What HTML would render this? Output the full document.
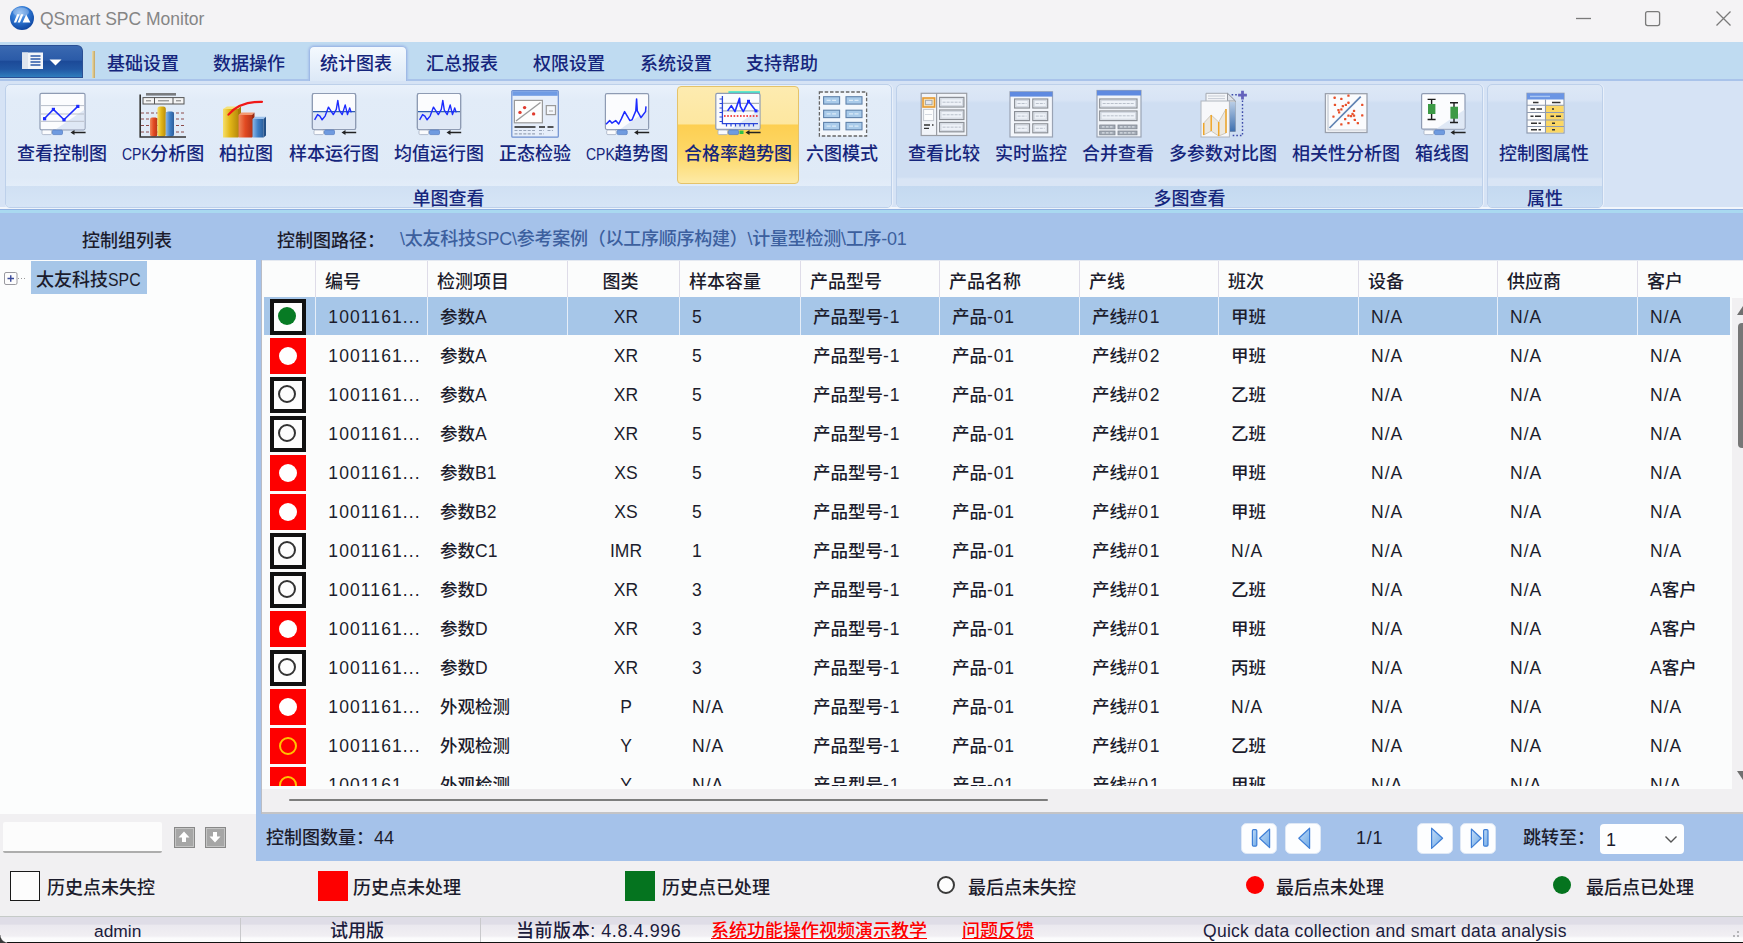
<!DOCTYPE html>
<html lang="zh-CN">
<head>
<meta charset="utf-8">
<title>QSmart SPC Monitor</title>
<style>
*{box-sizing:border-box;margin:0;padding:0}
html,body{width:1743px;height:943px;overflow:hidden;background:#f0f0f0}
body{font-family:"Liberation Sans","Noto Sans CJK SC",sans-serif;font-size:17.5px;color:#1c1c2c;position:relative;font-weight:500}
.abs{position:absolute}
#titlebar{left:0;top:0;width:1743px;height:42px;background:#f4f3f5}
#title{left:40px;top:7px;font-size:17.5px;color:#858585;line-height:24px;white-space:nowrap}
#tabstrip{left:0;top:42px;width:1743px;height:38px;background:#bfdbf1}
#tabline{left:0;top:79px;width:1743px;height:2px;background:#a9c3ea}
.tab{top:47px;height:34px;font-size:18px;line-height:34px;color:#15257c;white-space:nowrap;text-align:center;width:98px}
#tabactive{left:309px;top:46px;width:98px;height:35px;box-shadow:0 0 2px 1px #a9c2ea;clip-path:inset(-4px -4px 0 -4px);border:1px solid #9fbae6;border-bottom:none;border-radius:5px 5px 0 0;background:linear-gradient(#f4f9fe,#dce8f7)}
#appbtn{left:0;top:45px;width:83px;height:33px;border-radius:0 6px 0 0;background:linear-gradient(#3a69b1 0%,#2b5ba8 45%,#1c4a98 50%,#2157a3 75%,#2f7dbd 100%);border:1px solid #2a4f94;border-left:none}
#tabsep{left:92px;top:51px;width:3px;height:27px;background:linear-gradient(90deg,#e9dcae,#c5a662)}
#ribbon{left:0;top:81px;width:1743px;height:133px;background:linear-gradient(to bottom,#d6e3f5 0,#d6e3f5 126.5px,#f2f6fc 126.5px,#f2f6fc 128px,#8fb1e2 128px,#8fb1e2 129.5px,#a9d9f0 129.5px,#a9d9f0 132px,#a5c2ea 132px)}
.group{top:84px;height:124px;border:1px solid #bdd0ea;border-radius:5px;background:linear-gradient(#dde8f6 0,#d8e4f5 15px,#cfdef2 18px,#cfdef2 92px,#d9e5f5 94px,#d9e5f5 102px);box-shadow:0 1px 0 #eef4fb, 1px 0 0 #e9f0fa}
.group.hov{background:linear-gradient(#e9f1fb 0,#e2ecf8 14px,#dfeaf7 92px,#e3edf9 102px)}
.group.hov .gcap{background:linear-gradient(#d0e0f3,#d6e5f6)}
.gcap{left:0;right:0;bottom:0;height:21px;line-height:26.5px;text-align:center;font-size:18px;color:#15257c;background:linear-gradient(#c4d9f0,#cadef3);border-radius:0 0 4px 4px}
.btn{top:86px;height:98px;text-align:center}
.btn .lbl{position:absolute;left:-30px;right:-30px;top:56px;font-size:18px;line-height:24px;color:#15257c;white-space:nowrap;text-align:center}
.btn svg{position:absolute;top:4px;left:50%;margin-left:-24px}
#hot{left:677px;top:86px;width:122px;height:98px;border:1px solid #e5c36a;border-radius:4px;background:linear-gradient(#fdebb0 0%,#fde7a0 38%,#fdcf52 40%,#fdd868 70%,#fdeaa6 100%)}
#pathbar{left:0;top:214px;width:1743px;height:46px;background:#a5c2ea}
#pathbar span{position:absolute;top:14px;line-height:24px;font-size:18px;white-space:nowrap}
#left{left:0;top:260px;width:256px;height:554px;background:#fcfdfd}
#split{left:256px;top:260px;width:5px;height:601px;background:#a5c2ea}
#gridedge{left:261px;top:260px;width:1px;height:554px;background:#b9bcc4}
#grid{left:262px;top:260px;width:1481px;height:554px;background:#fbfcfc;overflow:hidden;border-top:1px solid #e4e9f1}
#botbar{left:0;top:814px;width:1743px;height:47px;background:#a5c2ea}
#leftbot{left:0;top:814px;width:256px;height:47px;background:#f1f0f2}
#legend{left:0;top:861px;width:1743px;height:54px;background:#f1f0f2}
#status{left:0;top:915px;width:1743px;height:28px;background:linear-gradient(to bottom,#f1f0f2 0,#f1f0f2 1px,#c6cbc8 1px,#c6cbc8 2px,#dfdde7 2px,#dfdde7 9px,#ebe9ef 10.5px,#f1eff3 21px,#fbfbfc 23px,#fcfcfc 100%)}
.hd{top:0;height:36px;line-height:43px;font-size:18px;padding-left:9px;border-left:1px solid #dedce8;white-space:nowrap;color:#1c1c2c}
.row{left:2px;width:1465.5px;height:37.5px}
.row.sel{background:#a6c6e8}
.c{top:0;height:40px;line-height:40px;white-space:nowrap;padding-left:13px;font-size:17.5px}
.ic{left:5.6px;top:1.5px;width:36px;height:36px}
.ic.k{border:4.2px solid #111;background:#fdfdfd}
.ic.r{background:#fe0000}
.dot{position:absolute;border-radius:50%}
.st{top:4px;line-height:24px;font-size:18px;white-space:nowrap;color:#1c1c3c}
.num{letter-spacing:1.1px;margin-left:0.3px}
.sp{top:0;width:1px;height:37.5px;background:#e6eef8}
.cpk{display:inline-block;font-size:16px;transform:scaleX(.875);transform-origin:0 50%;margin-right:-4.2px}
.lt{letter-spacing:.8px}
.lh{letter-spacing:1.6px}
.na{letter-spacing:1px}
</style>
</head>
<body>
<div id="titlebar" class="abs"></div>
<svg class="abs" style="left:9px;top:5px" width="26" height="26" viewBox="0 0 26 26">
<defs><radialGradient id="lg" cx="0.42" cy="0.3" r="0.75"><stop offset="0" stop-color="#7fb4f0"/><stop offset="0.45" stop-color="#2f78d4"/><stop offset="1" stop-color="#0b3f9a"/></radialGradient></defs>
<circle cx="13" cy="13" r="12" fill="url(#lg)"/>
<ellipse cx="12" cy="7" rx="8" ry="4.5" fill="#fff" opacity="0.28"/>
<path d="M8.2 9.2 L10.6 9.2 L7.2 17.6 L4.8 17.6 Z M12 9.2 L14.4 9.2 L11 17.6 L8.6 17.6 Z M17.2 9.6 L21.4 17.6 L13.6 17.6 Z" fill="#fff"/>
</svg>
<div id="title" class="abs">QSmart SPC Monitor</div>
<svg class="abs" style="left:1560px;top:0" width="183" height="42" viewBox="0 0 183 42" fill="none" stroke="#7a7a7a" stroke-width="1.3">
<path d="M16 18.5 H31"/>
<rect x="85.6" y="11.6" width="14" height="14" rx="2"/>
<path d="M156.5 11.5 L170.5 25.5 M170.5 11.5 L156.5 25.5"/>
</svg>
<div id="tabstrip" class="abs"></div>
<div id="ribbon" class="abs"></div>
<div id="tabline" class="abs"></div>
<div id="tabactive" class="abs"></div>
<div id="appbtn" class="abs"><svg class="abs" style="left:20px;top:5px" width="46" height="22" viewBox="0 0 46 22">
<rect x="2" y="1.5" width="21" height="16.5" fill="#f4f6f9"/>
<rect x="2" y="1.5" width="6" height="16.5" fill="#dfe5ee"/>
<path d="M10.5 5 H20.5 M10.5 8 H20.5 M10.5 11 H20.5 M10.5 14 H20.5" stroke="#2c5aa8" stroke-width="1.3"/>
<path d="M29.5 8.5 H41.5 L35.5 14.5 Z" fill="#fff"/>
</svg></div>
<div id="tabsep" class="abs"></div>
<div class="abs tab" style="left:94px">基础设置</div>
<div class="abs tab" style="left:200px">数据操作</div>
<div class="abs tab" style="left:307px">统计图表</div>
<div class="abs tab" style="left:413px">汇总报表</div>
<div class="abs tab" style="left:520px">权限设置</div>
<div class="abs tab" style="left:627px">系统设置</div>
<div class="abs tab" style="left:733px">支持帮助</div>

<div class="abs group hov" style="left:5px;width:887px"><div class="abs gcap">单图查看</div></div>
<div class="abs group" style="left:896px;width:587px"><div class="abs gcap">多图查看</div></div>
<div class="abs group" style="left:1487px;width:116px"><div class="abs gcap">属性</div></div>
<div id="hot" class="abs"></div>
<div class="abs btn" style="left:38px;width:48px"><svg width="48" height="48" viewBox="0 0 48 48" style="overflow:visible" ><rect x="2" y="3.3" width="45" height="36.5" rx="1.5" fill="#fbfcfe" stroke="#8e9bb3" stroke-width="1.2"/><path d="M46.4 19.725 V39.199999999999996 H17.75 Z" fill="#dfe8f5"/><rect x="4" y="40" width="9.5" height="4.6" rx="1.2" fill="#fafbfd" stroke="#a5afc2" stroke-width="0.8"/><rect x="14.5" y="40" width="10" height="4.6" rx="1.2" fill="#6f9be0" stroke="#5b82c4" stroke-width="0.8"/><path d="M47.6 42.5 H36" stroke="#222" stroke-width="1.5"/><path d="M32.5 42.5 L36.5 40 V45 Z" fill="#222"/><path d="M3 15.6 H46 M3 24 H46 M3 31.3 H46" stroke="#b9bfca" stroke-width="1"/><polyline points="6.5,28.6 15.4,19.4 26,29.8 39.8,16.4" fill="none" stroke="#1c2cff" stroke-width="1.5"/><g fill="#1c2cff"><rect x="5" y="27.1" width="3.2" height="3.2"/><rect x="13.8" y="17.8" width="3.2" height="3.2"/><rect x="24.4" y="28.2" width="3.2" height="3.2"/><rect x="38.2" y="14.8" width="3.2" height="3.2"/></g></svg><div class="lbl">查看控制图</div></div>
<div class="abs btn" style="left:139px;width:48px"><svg width="48" height="48" viewBox="0 0 48 48" style="overflow:visible" ><rect x="7" y="3" width="30" height="2.6" fill="#555" opacity="0.75"/><rect x="4" y="7.6" width="41" height="6.4" fill="#f4f4f4" stroke="#555" stroke-width="1"/><path d="M15.5 7.6 V14 M34 7.6 V14" stroke="#555"/><path d="M7 10.8 H12 M19 10.8 H30 M37 10.8 H42" stroke="#777" stroke-width="1"/><path d="M2 23 H46 M2 29 H46 M2 35.5 H46 M2 42 H46" stroke="#8c4a4a" stroke-width="1" stroke-dasharray="3 2"/><defs><linearGradient id="gr" x1="0" x2="1"><stop offset="0" stop-color="#f08a5c"/><stop offset="0.5" stop-color="#e24a22"/><stop offset="1" stop-color="#b8361a"/></linearGradient><linearGradient id="gy" x1="0" x2="1"><stop offset="0" stop-color="#f6df6a"/><stop offset="0.45" stop-color="#e3b718"/><stop offset="1" stop-color="#b98c0c"/></linearGradient><linearGradient id="gb" x1="0" x2="1"><stop offset="0" stop-color="#8cb8e8"/><stop offset="0.5" stop-color="#3f7fc6"/><stop offset="1" stop-color="#2c5f9c"/></linearGradient></defs><rect x="11" y="27.5" width="7.4" height="19" rx="2" fill="url(#gr)"/><rect x="18.4" y="16.4" width="8.4" height="30" rx="2.5" fill="url(#gy)"/><rect x="26.8" y="21.6" width="8.2" height="25" rx="2.5" fill="url(#gb)"/><path d="M1.2 4.5 V47 H47" fill="none" stroke="#333" stroke-width="1.6"/></svg><div class="lbl"><span class="cpk">CPK</span>分析图</div></div>
<div class="abs btn" style="left:222px;width:48px"><svg width="48" height="48" viewBox="0 0 48 48" style="overflow:visible" ><rect x="1" y="19" width="15" height="28.5" fill="url(#gy)"/><path d="M1 19 L5 16.5 H19 L16 19 Z" fill="#f4e27a"/><path d="M16 19 L19 16.5 V45 L16 47.5 Z" fill="#a67c08"/><rect x="16.5" y="25" width="13.5" height="22.5" fill="url(#gr)"/><path d="M16.5 25 L19.5 22.5 H32.5 L30 25 Z" fill="#f39a72"/><path d="M30 25 L32.5 22.5 V45.5 L30 47.5 Z" fill="#9c2c12"/><rect x="30.5" y="29" width="11" height="18.5" fill="url(#gb)"/><path d="M30.5 29 L33 26.8 H44 L41.5 29 Z" fill="#9cc2ec"/><path d="M41.5 29 L44 26.8 V45.5 L41.5 47.5 Z" fill="#234f86"/><path d="M6.5 24.6 C13 17, 24 11.5, 40 11.8" fill="none" stroke="#f01818" stroke-width="2.2" stroke-linecap="round"/></svg><div class="lbl">柏拉图</div></div>
<div class="abs btn" style="left:310px;width:48px"><svg width="48" height="48" viewBox="0 0 48 48" style="overflow:visible" ><rect x="2.4" y="3.5" width="43.2" height="36" rx="1.5" fill="#fbfcfe" stroke="#8e9bb3" stroke-width="1.2"/><rect x="3" y="21.6" width="42" height="17.3" fill="#dfe8f5"/><rect x="2.4" y="3.5" width="43.2" height="36" rx="1.5" fill="none" stroke="#8e9bb3" stroke-width="1.2"/><path d="M3 21.6 H45" stroke="#2f5fae" stroke-width="1.4"/><polyline points="4.6,29.8 7.6,24.6 9.9,26.1 12.1,29.8 15.1,26.1 18.5,17.1 23.3,24.6 26.3,19.4 27.8,10.4 29.3,20.1 32.2,24.6 35.2,14.9 37.5,24.6 39.7,17.9 41.2,22.4" fill="none" stroke="#1c2cff" stroke-width="1.4" stroke-linejoin="round"/><rect x="4" y="40" width="9.5" height="4.6" rx="1.2" fill="#fafbfd" stroke="#a5afc2" stroke-width="0.8"/><rect x="14.5" y="40" width="10" height="4.6" rx="1.2" fill="#6f9be0" stroke="#5b82c4" stroke-width="0.8"/><path d="M46.2 42.5 H35" stroke="#222" stroke-width="1.5"/><path d="M31.5 42.5 L35.5 40 V45 Z" fill="#222"/></svg><div class="lbl">样本运行图</div></div>
<div class="abs btn" style="left:415px;width:48px"><svg width="48" height="48" viewBox="0 0 48 48" style="overflow:visible" ><rect x="2.4" y="3.5" width="43.2" height="36" rx="1.5" fill="#fbfcfe" stroke="#8e9bb3" stroke-width="1.2"/><rect x="3" y="21.6" width="42" height="17.3" fill="#dfe8f5"/><rect x="2.4" y="3.5" width="43.2" height="36" rx="1.5" fill="none" stroke="#8e9bb3" stroke-width="1.2"/><path d="M3 21.6 H45" stroke="#2f5fae" stroke-width="1.4"/><polyline points="4.6,29.8 7.6,24.6 9.9,26.1 12.1,29.8 15.1,26.1 18.5,17.1 23.3,24.6 26.3,19.4 27.8,10.4 29.3,20.1 32.2,24.6 35.2,14.9 37.5,24.6 39.7,17.9 41.2,22.4" fill="none" stroke="#1c2cff" stroke-width="1.4" stroke-linejoin="round"/><rect x="4" y="40" width="9.5" height="4.6" rx="1.2" fill="#fafbfd" stroke="#a5afc2" stroke-width="0.8"/><rect x="14.5" y="40" width="10" height="4.6" rx="1.2" fill="#6f9be0" stroke="#5b82c4" stroke-width="0.8"/><path d="M46.2 42.5 H35" stroke="#222" stroke-width="1.5"/><path d="M31.5 42.5 L35.5 40 V45 Z" fill="#222"/></svg><div class="lbl">均值运行图</div></div>
<div class="abs btn" style="left:511px;width:48px"><svg width="48" height="48" viewBox="0 0 48 48" style="overflow:visible" ><rect x="0.8" y="0.6" width="46.5" height="46.6" rx="1" fill="#e6eefa" stroke="#6d8fd0" stroke-width="1.2"/><rect x="1.4" y="1.2" width="45.3" height="4.6" fill="#6f9be4"/><rect x="3.4" y="10.4" width="28" height="22.4" fill="#fdfdfd" stroke="#9a9a9a" stroke-width="1.2"/><path d="M5 31 L29.5 12.5" stroke="#9a9a9a" stroke-width="1.4"/><g fill="#e03a2e"><circle cx="13.6" cy="17.6" r="1.7"/><circle cx="9" cy="22.4" r="1.7"/><circle cx="22.6" cy="23.9" r="1.7"/></g><rect x="35.3" y="15.6" width="9.2" height="9" fill="#f4f7fb" stroke="#9a9a9a" stroke-width="1.2"/><path d="M38 21 H42" stroke="#aaa"/><path d="M3.5 37 H24.5 M28 37 H34 M36.5 37 H42.5" stroke="#222" stroke-width="1.6"/><path d="M3.5 40.5 H24 M28 40.5 H33 M36.5 40.5 H42 M3.5 43.8 H24 M28 43.8 H33" stroke="#98a4b8" stroke-width="1.2" stroke-dasharray="3 1.4"/></svg><div class="lbl">正态检验</div></div>
<div class="abs btn" style="left:603px;width:48px"><svg width="48" height="48" viewBox="0 0 48 48" style="overflow:visible" ><rect x="2.4" y="3.7" width="43.2" height="35.8" rx="1.5" fill="#fbfcfe" stroke="#8e9bb3" stroke-width="1.2"/><path d="M45.0 19.81 V38.9 H17.52 Z" fill="#dfe8f5"/><rect x="3.7" y="40" width="9.5" height="4.6" rx="1.2" fill="#fafbfd" stroke="#a5afc2" stroke-width="0.8"/><rect x="14.2" y="40" width="10" height="4.6" rx="1.2" fill="#6f9be0" stroke="#5b82c4" stroke-width="0.8"/><path d="M46.2 42.5 H34.6" stroke="#222" stroke-width="1.5"/><path d="M31.1 42.5 L35.1 40 V45 Z" fill="#222"/><polyline points="3,34.3 6.7,30.6 8.9,33.1 12.7,30.6 15.7,34 18.2,29.1 21.6,21.6 26.9,30.6 29.1,29.8 32.8,20.9 33.6,8.9 34.3,20.9 38,27.6 42.5,21.6 43,16.4" fill="none" stroke="#1c2cff" stroke-width="1.5" stroke-linejoin="round"/></svg><div class="lbl"><span class="cpk">CPK</span>趋势图</div></div>
<div class="abs btn" style="left:714px;width:48px"><svg width="48" height="48" viewBox="0 0 48 48" style="overflow:visible" ><rect x="14.4" y="1.2" width="31.6" height="2.4" fill="#3fe6cf"/><rect x="1.8" y="3.4" width="44.2" height="36" rx="1.5" fill="#fbfcfe" stroke="#8e9bb3" stroke-width="1.2"/><path d="M45.4 19.599999999999998 V38.8 H17.27 Z" fill="#dfe8f5"/><rect x="4" y="40" width="9.5" height="4.6" rx="1.2" fill="#fafbfd" stroke="#a5afc2" stroke-width="0.8"/><rect x="14.5" y="40" width="10" height="4.6" rx="1.2" fill="#6f9be0" stroke="#5b82c4" stroke-width="0.8"/><path d="M46.6 42.5 H35.0" stroke="#222" stroke-width="1.5"/><path d="M31.5 42.5 L35.5 40 V45 Z" fill="#222"/><rect x="25.5" y="40.6" width="4" height="3.4" fill="#2fc04a"/><path d="M9 13.4 H45 M9 20.9 H45" stroke="#aab0ba" stroke-width="1.2"/><path d="M8.4 6 V33.6 H44" fill="none" stroke="#2a46d8" stroke-width="1.3"/><path d="M5.5 9 H8.4 M5.5 13.5 H8.4 M5.5 18 H8.4 M5.5 22.5 H8.4 M5.5 27 H8.4 M5.5 31.5 H8.4" stroke="#2a46d8" stroke-width="1"/><path d="M12.5 33.6 V36.4 M17 33.6 V36.4 M21.5 33.6 V36.4 M26 33.6 V36.4 M30.5 33.6 V36.4 M35 33.6 V36.4 M39.5 33.6 V36.4" stroke="#2a46d8" stroke-width="1.2"/><path d="M10 26 H45" stroke="#f01414" stroke-width="1.6" stroke-dasharray="1.6 1.6"/><polyline points="13.6,20.9 17.3,15.6 21,21.6 25.5,8.2 26.3,16.4 29.3,21.6 34.5,11.2 42,20.9" fill="none" stroke="#1c2cff" stroke-width="1.6" stroke-linejoin="round"/><rect x="40.5" y="19.4" width="3" height="3" fill="#1c2cff"/><rect x="33" y="9.8" width="3" height="3" fill="#1c2cff"/></svg><div class="lbl">合格率趋势图</div></div>
<div class="abs btn" style="left:818px;width:48px"><svg width="48" height="48" viewBox="0 0 48 48" style="overflow:visible" ><rect x="1.4" y="2" width="47.2" height="44" fill="#f3f7fc" stroke="#666" stroke-width="1.3" stroke-dasharray="3.5 1.8"/><rect x="5.6" y="6.7" width="16" height="7.4" fill="#a9cbea" stroke="#5f82ab" stroke-width="1.1"/><path d="M8.6 10.4 H18.6" stroke="#dcebf8" stroke-width="1.4" stroke-dasharray="4 1.5"/><rect x="5.6" y="20.2" width="16" height="7.4" fill="#a9cbea" stroke="#5f82ab" stroke-width="1.1"/><path d="M8.6 23.9 H18.6" stroke="#dcebf8" stroke-width="1.4" stroke-dasharray="4 1.5"/><rect x="5.6" y="32.4" width="16" height="7.4" fill="#a9cbea" stroke="#5f82ab" stroke-width="1.1"/><path d="M8.6 36.1 H18.6" stroke="#dcebf8" stroke-width="1.4" stroke-dasharray="4 1.5"/><rect x="28" y="6.7" width="16" height="7.4" fill="#a9cbea" stroke="#5f82ab" stroke-width="1.1"/><path d="M31 10.4 H41" stroke="#dcebf8" stroke-width="1.4" stroke-dasharray="4 1.5"/><rect x="28" y="20.2" width="16" height="7.4" fill="#a9cbea" stroke="#5f82ab" stroke-width="1.1"/><path d="M31 23.9 H41" stroke="#dcebf8" stroke-width="1.4" stroke-dasharray="4 1.5"/><rect x="28" y="32.4" width="16" height="7.4" fill="#a9cbea" stroke="#5f82ab" stroke-width="1.1"/><path d="M31 36.1 H41" stroke="#dcebf8" stroke-width="1.4" stroke-dasharray="4 1.5"/></svg><div class="lbl">六图模式</div></div>
<div class="abs btn" style="left:920px;width:48px"><svg width="48" height="48" viewBox="0 0 48 48" style="overflow:visible" ><rect x="1.2" y="3.3" width="45.5" height="42.2" fill="#f1f4f9" stroke="#9a9da4" stroke-width="1.2"/><path d="M16.6 3.3 V45.5" stroke="#9a9da4" stroke-width="1.2"/><rect x="3" y="8" width="11.6" height="9" fill="#f7e2b6" stroke="#e59a30" stroke-width="1.6"/><rect x="5.6" y="10.3" width="6.4" height="4.4" fill="#e5e8ee" stroke="#9a9da4" stroke-width="0.8"/><rect x="3.6" y="19.4" width="10" height="11.2" fill="#fdfdfd" stroke="#c4c8d0" stroke-width="1"/><path d="M5 24.5 H12" stroke="#d5d9e0"/><path d="M4 35 H10 M12 35 H13.5 M4 38.4 H9" stroke="#333" stroke-width="1.4"/><rect x="19.6" y="7.4" width="24.3" height="9.6" fill="#eef2f8" stroke="#8b8f96" stroke-width="1.2"/><rect x="21.0" y="8.8" width="21.5" height="6.8" fill="none" stroke="#cfd5de" stroke-width="0.9"/><path d="M22.6 12.2 H40.900000000000006" stroke="#b9c0cb" stroke-width="1" stroke-dasharray="3 1"/><rect x="19.6" y="20" width="24.3" height="9.5" fill="#eef2f8" stroke="#8b8f96" stroke-width="1.2"/><rect x="21.0" y="21.4" width="21.5" height="6.7" fill="none" stroke="#cfd5de" stroke-width="0.9"/><path d="M22.6 24.75 H40.900000000000006" stroke="#b9c0cb" stroke-width="1" stroke-dasharray="3 1"/><rect x="19.6" y="32.5" width="24.3" height="9.3" fill="#eef2f8" stroke="#8b8f96" stroke-width="1.2"/><rect x="21.0" y="33.9" width="21.5" height="6.500000000000001" fill="none" stroke="#cfd5de" stroke-width="0.9"/><path d="M22.6 37.15 H40.900000000000006" stroke="#b9c0cb" stroke-width="1" stroke-dasharray="3 1"/></svg><div class="lbl">查看比较</div></div>
<div class="abs btn" style="left:1007px;width:48px"><svg width="48" height="48" viewBox="0 0 48 48" style="overflow:visible" ><rect x="3" y="1.8" width="42.5" height="45.2" fill="#f3f6fb" stroke="#9aa3b4" stroke-width="1.2"/><rect x="3" y="1.8" width="42.5" height="4.8" fill="#5f8ae0"/><rect x="7.6" y="9" width="14.9" height="9" fill="#eef2f8" stroke="#8b8f96" stroke-width="1.2"/><rect x="9.0" y="10.4" width="12.100000000000001" height="6.2" fill="none" stroke="#cfd5de" stroke-width="0.9"/><path d="M10.6 13.5 H19.5" stroke="#b9c0cb" stroke-width="1" stroke-dasharray="3 1"/><rect x="7.6" y="21.6" width="14.9" height="9" fill="#eef2f8" stroke="#8b8f96" stroke-width="1.2"/><rect x="9.0" y="23.0" width="12.100000000000001" height="6.2" fill="none" stroke="#cfd5de" stroke-width="0.9"/><path d="M10.6 26.1 H19.5" stroke="#b9c0cb" stroke-width="1" stroke-dasharray="3 1"/><rect x="7.6" y="33.8" width="14.9" height="9" fill="#eef2f8" stroke="#8b8f96" stroke-width="1.2"/><rect x="9.0" y="35.199999999999996" width="12.100000000000001" height="6.2" fill="none" stroke="#cfd5de" stroke-width="0.9"/><path d="M10.6 38.3 H19.5" stroke="#b9c0cb" stroke-width="1" stroke-dasharray="3 1"/><rect x="25.8" y="9" width="14.9" height="9" fill="#eef2f8" stroke="#8b8f96" stroke-width="1.2"/><rect x="27.2" y="10.4" width="12.100000000000001" height="6.2" fill="none" stroke="#cfd5de" stroke-width="0.9"/><path d="M28.8 13.5 H37.7" stroke="#b9c0cb" stroke-width="1" stroke-dasharray="3 1"/><rect x="25.8" y="21.6" width="14.9" height="9" fill="#eef2f8" stroke="#8b8f96" stroke-width="1.2"/><rect x="27.2" y="23.0" width="12.100000000000001" height="6.2" fill="none" stroke="#cfd5de" stroke-width="0.9"/><path d="M28.8 26.1 H37.7" stroke="#b9c0cb" stroke-width="1" stroke-dasharray="3 1"/><rect x="25.8" y="33.8" width="14.9" height="9" fill="#eef2f8" stroke="#8b8f96" stroke-width="1.2"/><rect x="27.2" y="35.199999999999996" width="12.100000000000001" height="6.2" fill="none" stroke="#cfd5de" stroke-width="0.9"/><path d="M28.8 38.3 H37.7" stroke="#b9c0cb" stroke-width="1" stroke-dasharray="3 1"/></svg><div class="lbl">实时监控</div></div>
<div class="abs btn" style="left:1094px;width:48px"><svg width="48" height="48" viewBox="0 0 48 48" style="overflow:visible" ><rect x="3" y="0.5" width="44" height="46.5" fill="#f1f4f9" stroke="#9aa3b4" stroke-width="1.2"/><rect x="3" y="0.5" width="44" height="5" fill="#5f8ae0"/><rect x="5.7" y="9" width="37.3" height="9" fill="#eef2f8" stroke="#8b8f96" stroke-width="1.2"/><rect x="7.1" y="10.4" width="34.5" height="6.2" fill="none" stroke="#cfd5de" stroke-width="0.9"/><path d="M8.7 13.5 H40.0" stroke="#b9c0cb" stroke-width="1" stroke-dasharray="3 1"/><rect x="5.7" y="21" width="37.3" height="9.6" fill="#eef2f8" stroke="#8b8f96" stroke-width="1.2"/><rect x="7.1" y="22.4" width="34.5" height="6.8" fill="none" stroke="#cfd5de" stroke-width="0.9"/><path d="M8.7 25.8 H40.0" stroke="#b9c0cb" stroke-width="1" stroke-dasharray="3 1"/><g fill="#a3abb6" stroke="#7f8791" stroke-width="0.8"><rect x="5.7" y="35" width="15.3" height="3.8"/><rect x="24" y="35" width="19" height="3.8"/><rect x="5.7" y="41" width="15.3" height="3.8"/><rect x="24" y="41" width="19" height="3.8"/></g><path d="M8 36.9 H19 M26 36.9 H41 M8 42.9 H19 M26 42.9 H41" stroke="#e4e8ee" stroke-width="1" stroke-dasharray="2.5 1.5"/></svg><div class="lbl">合并查看</div></div>
<div class="abs btn" style="left:1199px;width:48px"><svg width="48" height="48" viewBox="0 0 48 48" style="overflow:visible" ><defs><linearGradient id="gm" x1="0" y1="0" x2="0" y2="1"><stop offset="0" stop-color="#b9cde6"/><stop offset="1" stop-color="#3f70b0"/></linearGradient></defs><path d="M7 3.3 H28.5 L36.4 11 V41.5 H7 Z" fill="#f4f6f9" stroke="#a4a9b2" stroke-width="1"/><path d="M28.5 3.3 V11 H36.4 Z" fill="#dfe3ea" stroke="#8d929b" stroke-width="0.9"/><path d="M9 6 H26 M9 8.6 H26" stroke="#c6cbd4" stroke-width="1"/><rect x="30.4" y="12" width="6" height="29.5" fill="url(#gm)"/><rect x="2" y="11" width="28.4" height="36" fill="#f7f8fa" stroke="#b0b5be" stroke-width="1"/><path d="M4.7 33 L12.2 25 L19.7 32 L27 19 V43 L19.7 46 L12.2 41 L4.7 45 Z" fill="#ece8e0" stroke="#c9c3b6" stroke-width="0.9"/><path d="M4.7 33 V45 M12.2 25 V41 M19.7 32 V46 M27 19 V43" stroke="#f0a628" stroke-width="1.5"/><path d="M43.5 10.5 V45.5 H33" fill="none" stroke="#3c4aa8" stroke-width="1.4" stroke-dasharray="1.6 2"/><path d="M32.6 4.8 H38" stroke="#3c4aa8" stroke-width="1.4" stroke-dasharray="1.6 2"/><path d="M43.5 0.8 V9.6 M39.1 5.2 H47.9" stroke="#6462bc" stroke-width="2.8"/></svg><div class="lbl">多参数对比图</div></div>
<div class="abs btn" style="left:1322px;width:48px"><svg width="48" height="48" viewBox="0 0 48 48" style="overflow:visible" ><rect x="3.4" y="3.7" width="41.6" height="38.8" fill="#fafbfd" stroke="#9aa0ac" stroke-width="1.3"/><path d="M6 5 V40 H44" fill="none" stroke="#c2c8d2" stroke-width="1.2"/><path d="M7.5 38 L38.7 6.7" stroke="#5f82b2" stroke-width="1.7"/><g fill="#e8502a"><rect x="11.5" y="6.6" width="2.3" height="2.3" rx="0.6"/><rect x="18.2" y="7.8" width="2.3" height="2.3" rx="0.6"/><rect x="25.3" y="4.5" width="2.3" height="2.3" rx="0.6"/><rect x="11.8" y="13.8" width="2.3" height="2.3" rx="0.6"/><rect x="19.7" y="15.0" width="2.3" height="2.3" rx="0.6"/><rect x="25.3" y="11.6" width="2.3" height="2.3" rx="0.6"/><rect x="22.7" y="13.8" width="2.3" height="2.3" rx="0.6"/><rect x="39.1" y="13.8" width="2.3" height="2.3" rx="0.6"/><rect x="15.3" y="19.0" width="2.3" height="2.3" rx="0.6"/><rect x="18.2" y="18.3" width="2.3" height="2.3" rx="0.6"/><rect x="16.0" y="21.3" width="2.3" height="2.3" rx="0.6"/><rect x="30.9" y="19.8" width="2.3" height="2.3" rx="0.6"/><rect x="29.4" y="22.8" width="2.3" height="2.3" rx="0.6"/><rect x="10.3" y="25.4" width="2.3" height="2.3" rx="0.6"/><rect x="25.3" y="24.5" width="2.3" height="2.3" rx="0.6"/><rect x="27.9" y="25.0" width="2.3" height="2.3" rx="0.6"/><rect x="30.9" y="24.5" width="2.3" height="2.3" rx="0.6"/><rect x="39.1" y="24.2" width="2.3" height="2.3" rx="0.6"/><rect x="22.0" y="28.0" width="2.3" height="2.3" rx="0.6"/><rect x="18.2" y="33.2" width="2.3" height="2.3" rx="0.6"/><rect x="25.3" y="32.0" width="2.3" height="2.3" rx="0.6"/><rect x="34.7" y="32.0" width="2.3" height="2.3" rx="0.6"/><rect x="31.7" y="28.7" width="2.3" height="2.3" rx="0.6"/></g></svg><div class="lbl">相关性分析图</div></div>
<div class="abs btn" style="left:1418px;width:48px"><svg width="48" height="48" viewBox="0 0 48 48" style="overflow:visible" ><rect x="3.6" y="3.7" width="43.4" height="35.5" rx="1.5" fill="#fbfcfe" stroke="#8e9bb3" stroke-width="1.2"/><path d="M46.4 19.675 V38.6 H18.79 Z" fill="#dfe8f5"/><rect x="6" y="40" width="9.5" height="4.6" rx="1.2" fill="#fafbfd" stroke="#a5afc2" stroke-width="0.8"/><rect x="16.5" y="40" width="10" height="4.6" rx="1.2" fill="#6f9be0" stroke="#5b82c4" stroke-width="0.8"/><path d="M47.6 42.5 H36.0" stroke="#222" stroke-width="1.5"/><path d="M32.5 42.5 L36.5 40 V45 Z" fill="#222"/><path d="M13.6 9.4 V29.5 M9.6 9.4 H17.6 M9.6 29.5 H17.6 M36 12.7 V32.5 M32 12.7 H40 M32 32.5 H40" stroke="#1d1d1d" stroke-width="1.4"/><rect x="10" y="14" width="7.4" height="10" fill="#3c9a46"/><rect x="32.4" y="16.7" width="7.6" height="12" fill="#3c9a46"/></svg><div class="lbl">箱线图</div></div>
<div class="abs btn" style="left:1520px;width:48px"><svg width="48" height="48" viewBox="0 0 48 48" style="overflow:visible" ><rect x="7" y="3.3" width="37" height="39.7" fill="#fdfdfd" stroke="#8f9bb0" stroke-width="1.2"/><rect x="7" y="3.3" width="37" height="6.2" fill="#6b95e4"/><path d="M10 6.4 H30" stroke="#a9c6f2" stroke-width="1.4"/><rect x="25.5" y="15.2" width="18" height="27.4" fill="#fbd764"/><path d="M25.5 9.5 V43 M7 15.2 H44 M7 22.5 H44 M7 30 H44 M7 36.5 H44" stroke="#8f9bb0" stroke-width="1.1"/><path d="M13 12.4 H18.5 M32 12.4 H40.5 M10.5 18.9 H15 M16.5 18.9 H22 M32 18.9 H34 M10.5 26.3 H13.5 M15 26.3 H21 M30.5 26.3 H34 M36 26.3 H41 M11 33.3 H17 M18.5 33.3 H21 M32 33.3 H35 M11 39.8 H17 M18.5 39.8 H21 M32 39.8 H35" stroke="#333" stroke-width="1.5"/></svg><div class="lbl">控制图属性</div></div>

<div id="pathbar" class="abs"><span style="left:82px;top:15px">控制组列表</span><span style="left:277px;top:15px">控制图路径：</span><span style="left:400px;top:12.7px;letter-spacing:-0.25px;color:#3c5f9e">\太友科技SPC\参考案例（以工序顺序构建）\计量型检测\工序-01</span></div>
<div id="left" class="abs">
<div class="abs" style="left:31px;top:0.5px;width:115.5px;height:33.5px;background:#a6c6e8"></div>
<div class="abs" style="left:36px;top:7px;line-height:26px;font-size:18px;white-space:nowrap">太友科技<span style="display:inline-block;transform:scaleX(.88);transform-origin:0 50%">SPC</span></div>
<svg class="abs" style="left:3px;top:10.5px" width="24" height="15" viewBox="0 0 24 15">
<rect x="1.5" y="1.5" width="12.5" height="12" rx="1.5" fill="#fdfdfd" stroke="#9a9aa0"/>
<path d="M4.5 7.5 H11 M7.75 4.2 V10.8" stroke="#3a4a9a" stroke-width="1.4"/>
<path d="M15 7.5 H22" stroke="#999" stroke-width="1" stroke-dasharray="1 2"/>
</svg>
</div>
<div id="split" class="abs"></div>
<div id="gridedge" class="abs"></div>
<div id="grid" class="abs">
<div class="abs hd" style="left:53px;width:112px;">编号</div>
<div class="abs hd" style="left:165px;width:140px;">检测项目</div>
<div class="abs hd" style="left:305px;width:112px;text-align:center;padding-left:0;padding-right:6px;">图类</div>
<div class="abs hd" style="left:417px;width:121px;">样本容量</div>
<div class="abs hd" style="left:538px;width:139px;">产品型号</div>
<div class="abs hd" style="left:677px;width:140px;">产品名称</div>
<div class="abs hd" style="left:817px;width:139px;">产线</div>
<div class="abs hd" style="left:956px;width:140px;">班次</div>
<div class="abs hd" style="left:1096px;width:139px;">设备</div>
<div class="abs hd" style="left:1235px;width:140px;">供应商</div>
<div class="abs hd" style="left:1375px;width:106px;">客户</div>
<div class="abs" style="left:0;top:0;width:1481px;height:525px;overflow:hidden">
<div class="abs row sel" style="top:36px"><div class="abs ic k"><i class="dot" style="left:4.8px;top:4.9px;width:18px;height:18px;background:#077b24"></i></div><i class="abs sp" style="left:51px"></i><div class="abs c" style="left:51px;width:112px;"><span class="num">1001161...</span></div><i class="abs sp" style="left:163px"></i><div class="abs c" style="left:163px;width:140px;">参数A</div><i class="abs sp" style="left:303px"></i><div class="abs c" style="left:303px;width:112px;text-align:center;padding-left:6px;">XR</div><i class="abs sp" style="left:415px"></i><div class="abs c" style="left:415px;width:121px;">5</div><i class="abs sp" style="left:536px"></i><div class="abs c" style="left:536px;width:139px;">产品型号<span class="lt">-1</span></div><i class="abs sp" style="left:675px"></i><div class="abs c" style="left:675px;width:140px;">产品<span class="lt">-01</span></div><i class="abs sp" style="left:815px"></i><div class="abs c" style="left:815px;width:139px;">产线<span class="lh">#01</span></div><i class="abs sp" style="left:954px"></i><div class="abs c" style="left:954px;width:140px;">甲班</div><i class="abs sp" style="left:1094px"></i><div class="abs c" style="left:1094px;width:139px;"><span class="na">N/A</span></div><i class="abs sp" style="left:1233px"></i><div class="abs c" style="left:1233px;width:140px;"><span class="na">N/A</span></div><i class="abs sp" style="left:1373px"></i><div class="abs c" style="left:1373px;width:106px;"><span class="na">N/A</span></div></div>
<div class="abs row" style="top:75px"><div class="abs ic r"><i class="dot" style="left:9px;top:9px;width:18px;height:18px;background:#fff"></i></div><div class="abs c" style="left:51px;width:112px;"><span class="num">1001161...</span></div><div class="abs c" style="left:163px;width:140px;">参数A</div><div class="abs c" style="left:303px;width:112px;text-align:center;padding-left:6px;">XR</div><div class="abs c" style="left:415px;width:121px;">5</div><div class="abs c" style="left:536px;width:139px;">产品型号<span class="lt">-1</span></div><div class="abs c" style="left:675px;width:140px;">产品<span class="lt">-01</span></div><div class="abs c" style="left:815px;width:139px;">产线<span class="lh">#02</span></div><div class="abs c" style="left:954px;width:140px;">甲班</div><div class="abs c" style="left:1094px;width:139px;"><span class="na">N/A</span></div><div class="abs c" style="left:1233px;width:140px;"><span class="na">N/A</span></div><div class="abs c" style="left:1373px;width:106px;"><span class="na">N/A</span></div></div>
<div class="abs row" style="top:114px"><div class="abs ic k"><i class="dot" style="left:4.8px;top:4.9px;width:18px;height:18px;border:2px solid #333"></i></div><div class="abs c" style="left:51px;width:112px;"><span class="num">1001161...</span></div><div class="abs c" style="left:163px;width:140px;">参数A</div><div class="abs c" style="left:303px;width:112px;text-align:center;padding-left:6px;">XR</div><div class="abs c" style="left:415px;width:121px;">5</div><div class="abs c" style="left:536px;width:139px;">产品型号<span class="lt">-1</span></div><div class="abs c" style="left:675px;width:140px;">产品<span class="lt">-01</span></div><div class="abs c" style="left:815px;width:139px;">产线<span class="lh">#02</span></div><div class="abs c" style="left:954px;width:140px;">乙班</div><div class="abs c" style="left:1094px;width:139px;"><span class="na">N/A</span></div><div class="abs c" style="left:1233px;width:140px;"><span class="na">N/A</span></div><div class="abs c" style="left:1373px;width:106px;"><span class="na">N/A</span></div></div>
<div class="abs row" style="top:153px"><div class="abs ic k"><i class="dot" style="left:4.8px;top:4.9px;width:18px;height:18px;border:2px solid #333"></i></div><div class="abs c" style="left:51px;width:112px;"><span class="num">1001161...</span></div><div class="abs c" style="left:163px;width:140px;">参数A</div><div class="abs c" style="left:303px;width:112px;text-align:center;padding-left:6px;">XR</div><div class="abs c" style="left:415px;width:121px;">5</div><div class="abs c" style="left:536px;width:139px;">产品型号<span class="lt">-1</span></div><div class="abs c" style="left:675px;width:140px;">产品<span class="lt">-01</span></div><div class="abs c" style="left:815px;width:139px;">产线<span class="lh">#01</span></div><div class="abs c" style="left:954px;width:140px;">乙班</div><div class="abs c" style="left:1094px;width:139px;"><span class="na">N/A</span></div><div class="abs c" style="left:1233px;width:140px;"><span class="na">N/A</span></div><div class="abs c" style="left:1373px;width:106px;"><span class="na">N/A</span></div></div>
<div class="abs row" style="top:192px"><div class="abs ic r"><i class="dot" style="left:9px;top:9px;width:18px;height:18px;background:#fff"></i></div><div class="abs c" style="left:51px;width:112px;"><span class="num">1001161...</span></div><div class="abs c" style="left:163px;width:140px;">参数B1</div><div class="abs c" style="left:303px;width:112px;text-align:center;padding-left:6px;">XS</div><div class="abs c" style="left:415px;width:121px;">5</div><div class="abs c" style="left:536px;width:139px;">产品型号<span class="lt">-1</span></div><div class="abs c" style="left:675px;width:140px;">产品<span class="lt">-01</span></div><div class="abs c" style="left:815px;width:139px;">产线<span class="lh">#01</span></div><div class="abs c" style="left:954px;width:140px;">甲班</div><div class="abs c" style="left:1094px;width:139px;"><span class="na">N/A</span></div><div class="abs c" style="left:1233px;width:140px;"><span class="na">N/A</span></div><div class="abs c" style="left:1373px;width:106px;"><span class="na">N/A</span></div></div>
<div class="abs row" style="top:231px"><div class="abs ic r"><i class="dot" style="left:9px;top:9px;width:18px;height:18px;background:#fff"></i></div><div class="abs c" style="left:51px;width:112px;"><span class="num">1001161...</span></div><div class="abs c" style="left:163px;width:140px;">参数B2</div><div class="abs c" style="left:303px;width:112px;text-align:center;padding-left:6px;">XS</div><div class="abs c" style="left:415px;width:121px;">5</div><div class="abs c" style="left:536px;width:139px;">产品型号<span class="lt">-1</span></div><div class="abs c" style="left:675px;width:140px;">产品<span class="lt">-01</span></div><div class="abs c" style="left:815px;width:139px;">产线<span class="lh">#01</span></div><div class="abs c" style="left:954px;width:140px;">甲班</div><div class="abs c" style="left:1094px;width:139px;"><span class="na">N/A</span></div><div class="abs c" style="left:1233px;width:140px;"><span class="na">N/A</span></div><div class="abs c" style="left:1373px;width:106px;"><span class="na">N/A</span></div></div>
<div class="abs row" style="top:270px"><div class="abs ic k"><i class="dot" style="left:4.8px;top:4.9px;width:18px;height:18px;border:2px solid #333"></i></div><div class="abs c" style="left:51px;width:112px;"><span class="num">1001161...</span></div><div class="abs c" style="left:163px;width:140px;">参数C1</div><div class="abs c" style="left:303px;width:112px;text-align:center;padding-left:6px;">IMR</div><div class="abs c" style="left:415px;width:121px;">1</div><div class="abs c" style="left:536px;width:139px;">产品型号<span class="lt">-1</span></div><div class="abs c" style="left:675px;width:140px;">产品<span class="lt">-01</span></div><div class="abs c" style="left:815px;width:139px;">产线<span class="lh">#01</span></div><div class="abs c" style="left:954px;width:140px;"><span class="na">N/A</span></div><div class="abs c" style="left:1094px;width:139px;"><span class="na">N/A</span></div><div class="abs c" style="left:1233px;width:140px;"><span class="na">N/A</span></div><div class="abs c" style="left:1373px;width:106px;"><span class="na">N/A</span></div></div>
<div class="abs row" style="top:309px"><div class="abs ic k"><i class="dot" style="left:4.8px;top:4.9px;width:18px;height:18px;border:2px solid #333"></i></div><div class="abs c" style="left:51px;width:112px;"><span class="num">1001161...</span></div><div class="abs c" style="left:163px;width:140px;">参数D</div><div class="abs c" style="left:303px;width:112px;text-align:center;padding-left:6px;">XR</div><div class="abs c" style="left:415px;width:121px;">3</div><div class="abs c" style="left:536px;width:139px;">产品型号<span class="lt">-1</span></div><div class="abs c" style="left:675px;width:140px;">产品<span class="lt">-01</span></div><div class="abs c" style="left:815px;width:139px;">产线<span class="lh">#01</span></div><div class="abs c" style="left:954px;width:140px;">乙班</div><div class="abs c" style="left:1094px;width:139px;"><span class="na">N/A</span></div><div class="abs c" style="left:1233px;width:140px;"><span class="na">N/A</span></div><div class="abs c" style="left:1373px;width:106px;">A客户</div></div>
<div class="abs row" style="top:348px"><div class="abs ic r"><i class="dot" style="left:9px;top:9px;width:18px;height:18px;background:#fff"></i></div><div class="abs c" style="left:51px;width:112px;"><span class="num">1001161...</span></div><div class="abs c" style="left:163px;width:140px;">参数D</div><div class="abs c" style="left:303px;width:112px;text-align:center;padding-left:6px;">XR</div><div class="abs c" style="left:415px;width:121px;">3</div><div class="abs c" style="left:536px;width:139px;">产品型号<span class="lt">-1</span></div><div class="abs c" style="left:675px;width:140px;">产品<span class="lt">-01</span></div><div class="abs c" style="left:815px;width:139px;">产线<span class="lh">#01</span></div><div class="abs c" style="left:954px;width:140px;">甲班</div><div class="abs c" style="left:1094px;width:139px;"><span class="na">N/A</span></div><div class="abs c" style="left:1233px;width:140px;"><span class="na">N/A</span></div><div class="abs c" style="left:1373px;width:106px;">A客户</div></div>
<div class="abs row" style="top:387px"><div class="abs ic k"><i class="dot" style="left:4.8px;top:4.9px;width:18px;height:18px;border:2px solid #333"></i></div><div class="abs c" style="left:51px;width:112px;"><span class="num">1001161...</span></div><div class="abs c" style="left:163px;width:140px;">参数D</div><div class="abs c" style="left:303px;width:112px;text-align:center;padding-left:6px;">XR</div><div class="abs c" style="left:415px;width:121px;">3</div><div class="abs c" style="left:536px;width:139px;">产品型号<span class="lt">-1</span></div><div class="abs c" style="left:675px;width:140px;">产品<span class="lt">-01</span></div><div class="abs c" style="left:815px;width:139px;">产线<span class="lh">#01</span></div><div class="abs c" style="left:954px;width:140px;">丙班</div><div class="abs c" style="left:1094px;width:139px;"><span class="na">N/A</span></div><div class="abs c" style="left:1233px;width:140px;"><span class="na">N/A</span></div><div class="abs c" style="left:1373px;width:106px;">A客户</div></div>
<div class="abs row" style="top:426px"><div class="abs ic r"><i class="dot" style="left:9px;top:9px;width:18px;height:18px;background:#fff"></i></div><div class="abs c" style="left:51px;width:112px;"><span class="num">1001161...</span></div><div class="abs c" style="left:163px;width:140px;">外观检测</div><div class="abs c" style="left:303px;width:112px;text-align:center;padding-left:6px;">P</div><div class="abs c" style="left:415px;width:121px;"><span class="na">N/A</span></div><div class="abs c" style="left:536px;width:139px;">产品型号<span class="lt">-1</span></div><div class="abs c" style="left:675px;width:140px;">产品<span class="lt">-01</span></div><div class="abs c" style="left:815px;width:139px;">产线<span class="lh">#01</span></div><div class="abs c" style="left:954px;width:140px;"><span class="na">N/A</span></div><div class="abs c" style="left:1094px;width:139px;"><span class="na">N/A</span></div><div class="abs c" style="left:1233px;width:140px;"><span class="na">N/A</span></div><div class="abs c" style="left:1373px;width:106px;"><span class="na">N/A</span></div></div>
<div class="abs row" style="top:465px"><div class="abs ic r"><i class="dot" style="left:9px;top:9px;width:18px;height:18px;border:2px solid #ffc400"></i></div><div class="abs c" style="left:51px;width:112px;"><span class="num">1001161...</span></div><div class="abs c" style="left:163px;width:140px;">外观检测</div><div class="abs c" style="left:303px;width:112px;text-align:center;padding-left:6px;">Y</div><div class="abs c" style="left:415px;width:121px;"><span class="na">N/A</span></div><div class="abs c" style="left:536px;width:139px;">产品型号<span class="lt">-1</span></div><div class="abs c" style="left:675px;width:140px;">产品<span class="lt">-01</span></div><div class="abs c" style="left:815px;width:139px;">产线<span class="lh">#01</span></div><div class="abs c" style="left:954px;width:140px;">乙班</div><div class="abs c" style="left:1094px;width:139px;"><span class="na">N/A</span></div><div class="abs c" style="left:1233px;width:140px;"><span class="na">N/A</span></div><div class="abs c" style="left:1373px;width:106px;"><span class="na">N/A</span></div></div>
<div class="abs row" style="top:504px"><div class="abs ic r"><i class="dot" style="left:9px;top:9px;width:18px;height:18px;border:2px solid #ffc400"></i></div><div class="abs c" style="left:51px;width:112px;"><span class="num">1001161...</span></div><div class="abs c" style="left:163px;width:140px;">外观检测</div><div class="abs c" style="left:303px;width:112px;text-align:center;padding-left:6px;">Y</div><div class="abs c" style="left:415px;width:121px;"><span class="na">N/A</span></div><div class="abs c" style="left:536px;width:139px;">产品型号<span class="lt">-1</span></div><div class="abs c" style="left:675px;width:140px;">产品<span class="lt">-01</span></div><div class="abs c" style="left:815px;width:139px;">产线<span class="lh">#01</span></div><div class="abs c" style="left:954px;width:140px;">甲班</div><div class="abs c" style="left:1094px;width:139px;"><span class="na">N/A</span></div><div class="abs c" style="left:1233px;width:140px;"><span class="na">N/A</span></div><div class="abs c" style="left:1373px;width:106px;"><span class="na">N/A</span></div></div>
</div>
<div class="abs" style="left:0;top:528px;width:1481px;height:23px;background:#f1f0f2"></div>
<div class="abs" style="left:0;top:551px;width:1481px;height:2px;background:#c4c4c6"></div>
<div class="abs" style="left:27px;top:537.6px;width:759px;height:2.6px;background:#7d7d7d;border-radius:1.5px"></div>
<div class="abs" style="left:1469.5px;top:37px;width:12px;height:491px;background:#f1f0f2"></div>
<div class="abs" style="left:1476.2px;top:62px;width:10px;height:125px;background:#777;border-radius:4px"></div>
<div class="abs" style="left:1474.6px;top:45px;width:0;height:0;border:6.5px solid transparent;border-bottom:9px solid #707070;border-top:none"></div>
<div class="abs" style="left:1474.6px;top:509.5px;width:0;height:0;border:6.5px solid transparent;border-top:9px solid #707070;border-bottom:none"></div>
</div>
<div id="botbar" class="abs">
<span class="abs" style="left:266px;top:10.5px;line-height:26px;font-size:18px;white-space:nowrap">控制图数量：44</span>
<svg class="abs" style="left:1241px;top:8.5px" width="36" height="31" viewBox="0 0 36 31">
<rect x="0.5" y="0.5" width="35" height="30" rx="5" fill="#fdfeff" stroke="#dfe8f5"/>
<defs><linearGradient id="pg" x1="0" y1="0" x2="1" y2="1"><stop offset="0" stop-color="#c4ddf8"/><stop offset="1" stop-color="#6ea9e6"/></linearGradient></defs><rect x="11.4" y="6.6" width="4.4" height="16.6" rx="1.2" fill="url(#pg)" stroke="#3f7fd6" stroke-width="1.2" stroke-linejoin="round"/><path d="M28.6 6 L18.6 15.2 L28.6 24.6 Z" fill="url(#pg)" stroke="#3f7fd6" stroke-width="1.2" stroke-linejoin="round"/></svg><svg class="abs" style="left:1285px;top:8.5px" width="36" height="31" viewBox="0 0 36 31">
<rect x="0.5" y="0.5" width="35" height="30" rx="5" fill="#fdfeff" stroke="#dfe8f5"/>
<path d="M24.6 5.2 L13.8 15.2 L24.6 25.4 Z" fill="url(#pg)" stroke="#3f7fd6" stroke-width="1.2" stroke-linejoin="round"/></svg><span class="abs" style="left:1356px;top:10.5px;line-height:26px;font-size:18px;letter-spacing:.8px;white-space:nowrap">1/1</span><svg class="abs" style="left:1417px;top:8.5px" width="36" height="31" viewBox="0 0 36 31">
<rect x="0.5" y="0.5" width="35" height="30" rx="5" fill="#fdfeff" stroke="#dfe8f5"/>
<path d="M14.6 5.2 L25.6 15.2 L14.6 25.4 Z" fill="url(#pg)" stroke="#3f7fd6" stroke-width="1.2" stroke-linejoin="round"/></svg><svg class="abs" style="left:1460px;top:8.5px" width="36" height="31" viewBox="0 0 36 31">
<rect x="0.5" y="0.5" width="35" height="30" rx="5" fill="#fdfeff" stroke="#dfe8f5"/>
<path d="M11.4 6 L21.2 15.2 L11.4 24.6 Z" fill="url(#pg)" stroke="#3f7fd6" stroke-width="1.2" stroke-linejoin="round"/><rect x="23.6" y="6.6" width="4.4" height="16.6" rx="1.2" fill="url(#pg)" stroke="#3f7fd6" stroke-width="1.2" stroke-linejoin="round"/></svg><span class="abs" style="left:1523px;top:10.5px;line-height:26px;font-size:18px;white-space:nowrap">跳转至：</span><div class="abs" style="left:1600px;top:9.5px;width:84px;height:30.5px;background:#fdfeff;border-radius:4px"></div>
<span class="abs" style="left:1606px;top:13px;line-height:26px;font-size:18px">1</span>
<svg class="abs" style="left:1663px;top:20px" width="16" height="10" viewBox="0 0 16 10"><path d="M2.5 2.5 L8 8 L13.5 2.5" fill="none" stroke="#555" stroke-width="1.4"/></svg>
</div>
<div id="leftbot" class="abs"><div class="abs" style="left:3px;top:8px;width:159px;height:31px;background:#fcfcfc;border-bottom:2px solid #adadad;border-radius:2px"></div><svg class="abs" style="left:174px;top:13px" width="21" height="21" viewBox="0 0 21 21">
<rect x="0.5" y="0.5" width="20" height="20" fill="#a6a6a6" stroke="#888"/><rect x="1.5" y="1.5" width="18" height="18" fill="none" stroke="#c4c4c4"/>
<path d="M10 4.5 L15.5 10.5 H12 V15 H8 V10.5 H4.5 Z" fill="#fff"/></svg><svg class="abs" style="left:205px;top:13px" width="21" height="21" viewBox="0 0 21 21">
<rect x="0.5" y="0.5" width="20" height="20" fill="#a6a6a6" stroke="#888"/><rect x="1.5" y="1.5" width="18" height="18" fill="none" stroke="#c4c4c4"/>
<path d="M10 15.5 L15.5 9.5 H12 V5 H8 V9.5 H4.5 Z" fill="#fff"/></svg></div>
<div id="legend" class="abs"><div class="abs" style="left:10px;top:9.5px;width:30px;height:30px;background:#fdfdfd;border:1.6px solid #1a1a1a"></div><span class="abs" style="left:47px;top:14px;line-height:26px;font-size:18px;white-space:nowrap">历史点未失控</span><div class="abs" style="left:317.7px;top:9.5px;width:30px;height:30px;background:#fe0000"></div><span class="abs" style="left:353px;top:14px;line-height:26px;font-size:18px;white-space:nowrap">历史点未处理</span><div class="abs" style="left:625px;top:9.5px;width:30px;height:30px;background:#05741f"></div><span class="abs" style="left:662px;top:14px;line-height:26px;font-size:18px;white-space:nowrap">历史点已处理</span><div class="abs" style="left:937px;top:15px;width:18px;height:18px;border-radius:50%;background:#fdfdfd;border:2px solid #3a3a3a"></div><span class="abs" style="left:968px;top:14px;line-height:26px;font-size:18px;white-space:nowrap">最后点未失控</span><div class="abs" style="left:1246px;top:15px;width:18px;height:18px;border-radius:50%;background:#fe0000"></div><span class="abs" style="left:1276px;top:14px;line-height:26px;font-size:18px;white-space:nowrap">最后点未处理</span><div class="abs" style="left:1553px;top:15px;width:18px;height:18px;border-radius:50%;background:#05741f"></div><span class="abs" style="left:1586px;top:14px;line-height:26px;font-size:18px;white-space:nowrap">最后点已处理</span></div>
<div id="status" class="abs"><div class="abs" style="left:240px;top:3px;width:1px;height:25px;background:#c9c9cc"></div>
<div class="abs" style="left:480px;top:3px;width:1px;height:25px;background:#c9c9cc"></div>
<span class="abs st" style="left:94px;font-size:17.4px">admin</span>
<span class="abs st" style="left:330px">试用版</span>
<span class="abs st" style="left:516px;letter-spacing:0.55px">当前版本: 4.8.4.996</span>
<span class="abs st" style="left:711px;color:#fe0000;text-decoration:underline">系统功能操作视频演示教学</span>
<span class="abs st" style="left:962px;color:#fe0000;text-decoration:underline">问题反馈</span>
<span class="abs st" style="left:1203px;letter-spacing:0.28px;font-size:17.5px">Quick data collection and smart data analysis</span>
<svg class="abs" style="left:1729px;top:14px" width="12" height="12" viewBox="0 0 12 12" fill="#b5b5b8"><rect x="8" y="2" width="2" height="2"/><rect x="8" y="6" width="2" height="2"/><rect x="4" y="6" width="2" height="2"/></svg>
<div class="abs" style="left:7px;top:26.5px;width:1736px;height:1.5px;background:#111"></div><div class="abs" style="left:0;top:20px;width:8px;height:8px;background:radial-gradient(circle at 100% 0,rgba(0,0,0,0) 7px,#3a3a3a 8.2px)"></div></div>
</body>
</html>
